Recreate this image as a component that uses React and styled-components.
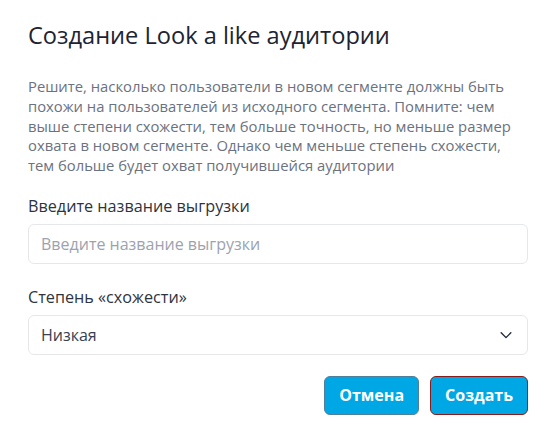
import React from 'react'
import styled, { createGlobalStyle } from 'styled-components'

const GlobalStyle = createGlobalStyle`
  * { box-sizing: border-box; }
  html, body {
    margin: 0;
    padding: 0;
    background: #ffffff;
  }
  body {
    font-family: "Open Sans", "Noto Sans", sans-serif;
  }
`

const Dialog = styled.div`
  width: 558px;
  height: 430px;
  padding: 19px 30px 0 28px;
  background: #fff;
`

const Title = styled.h2`
  margin: 0;
  font-size: 23.6px;
  line-height: 32px;
  font-weight: 400;
  color: #1c2433;
`

const Description = styled.p`
  margin: 26px 0 0;
  font-size: 14.8px;
  line-height: 19.8px;
  color: #6b7280;
`

const Field = styled.div`
  display: flex;
  flex-direction: column;
  gap: 6px;
  margin-top: ${props => props.$top}px;
`

const Label = styled.label`
  font-size: 16.2px;
  line-height: 24px;
  color: #2d3440;
`

const TextInput = styled.input`
  width: 100%;
  height: 40px;
  padding: 0 12px;
  border: 1px solid #e5e7eb;
  border-radius: 6px;
  font-family: inherit;
  font-size: 16px;
  color: #2d3440;
  outline: none;
  &::placeholder {
    color: #9ca3af;
  }
`

const Select = styled.div`
  display: flex;
  align-items: center;
  justify-content: space-between;
  height: 40px;
  padding: 0 14px 0 12px;
  border: 1px solid #e5e7eb;
  border-radius: 6px;
  font-size: 16px;
  color: #374151;
`

const Actions = styled.div`
  display: flex;
  justify-content: flex-end;
  gap: 11px;
  margin-top: 21px;
`

const Button = styled.button`
  height: 39px;
  padding: 0 14px;
  border-radius: 6px;
  border: 1px solid ${props => props.$border};
  background: #00a7e5;
  color: #fff;
  font-family: inherit;
  font-size: 16px;
  font-weight: 700;
  cursor: pointer;
`

const Chevron = () => (
  <svg width="14" height="14" viewBox="0 0 16 16" fill="none">
    <path d="M2.5 5.5L8 11l5.5-5.5" stroke="#1f2937" strokeWidth="1.6" strokeLinecap="round" strokeLinejoin="round" />
  </svg>
)

const App = () => {
  return (
    <>
      <GlobalStyle />
      <Dialog>
        <Title>Создание Look a like аудитории</Title>
        <Description>
          Решите, насколько пользователи в новом сегменте должны быть<br />
          похожи на пользователей из исходного сегмента. Помните: чем<br />
          выше степени схожести, тем больше точность, но меньше размер<br />
          охвата в новом сегменте. Однако чем меньше степень схожести,<br />
          тем больше будет охват получившейся аудитории
        </Description>
        <Field $top={18}>
          <Label>Введите название выгрузки</Label>
          <TextInput placeholder='Введите название выгрузки' />
        </Field>
        <Field $top={21}>
          <Label>Степень «схожести»</Label>
          <Select>
            <span>Низкая</span>
            <Chevron />
          </Select>
        </Field>
        <Actions>
          <Button $border='#4f7f9c'>Отмена</Button>
          <Button $border='#8b1a1a'>Создать</Button>
        </Actions>
      </Dialog>
    </>
  )
}

export default App
